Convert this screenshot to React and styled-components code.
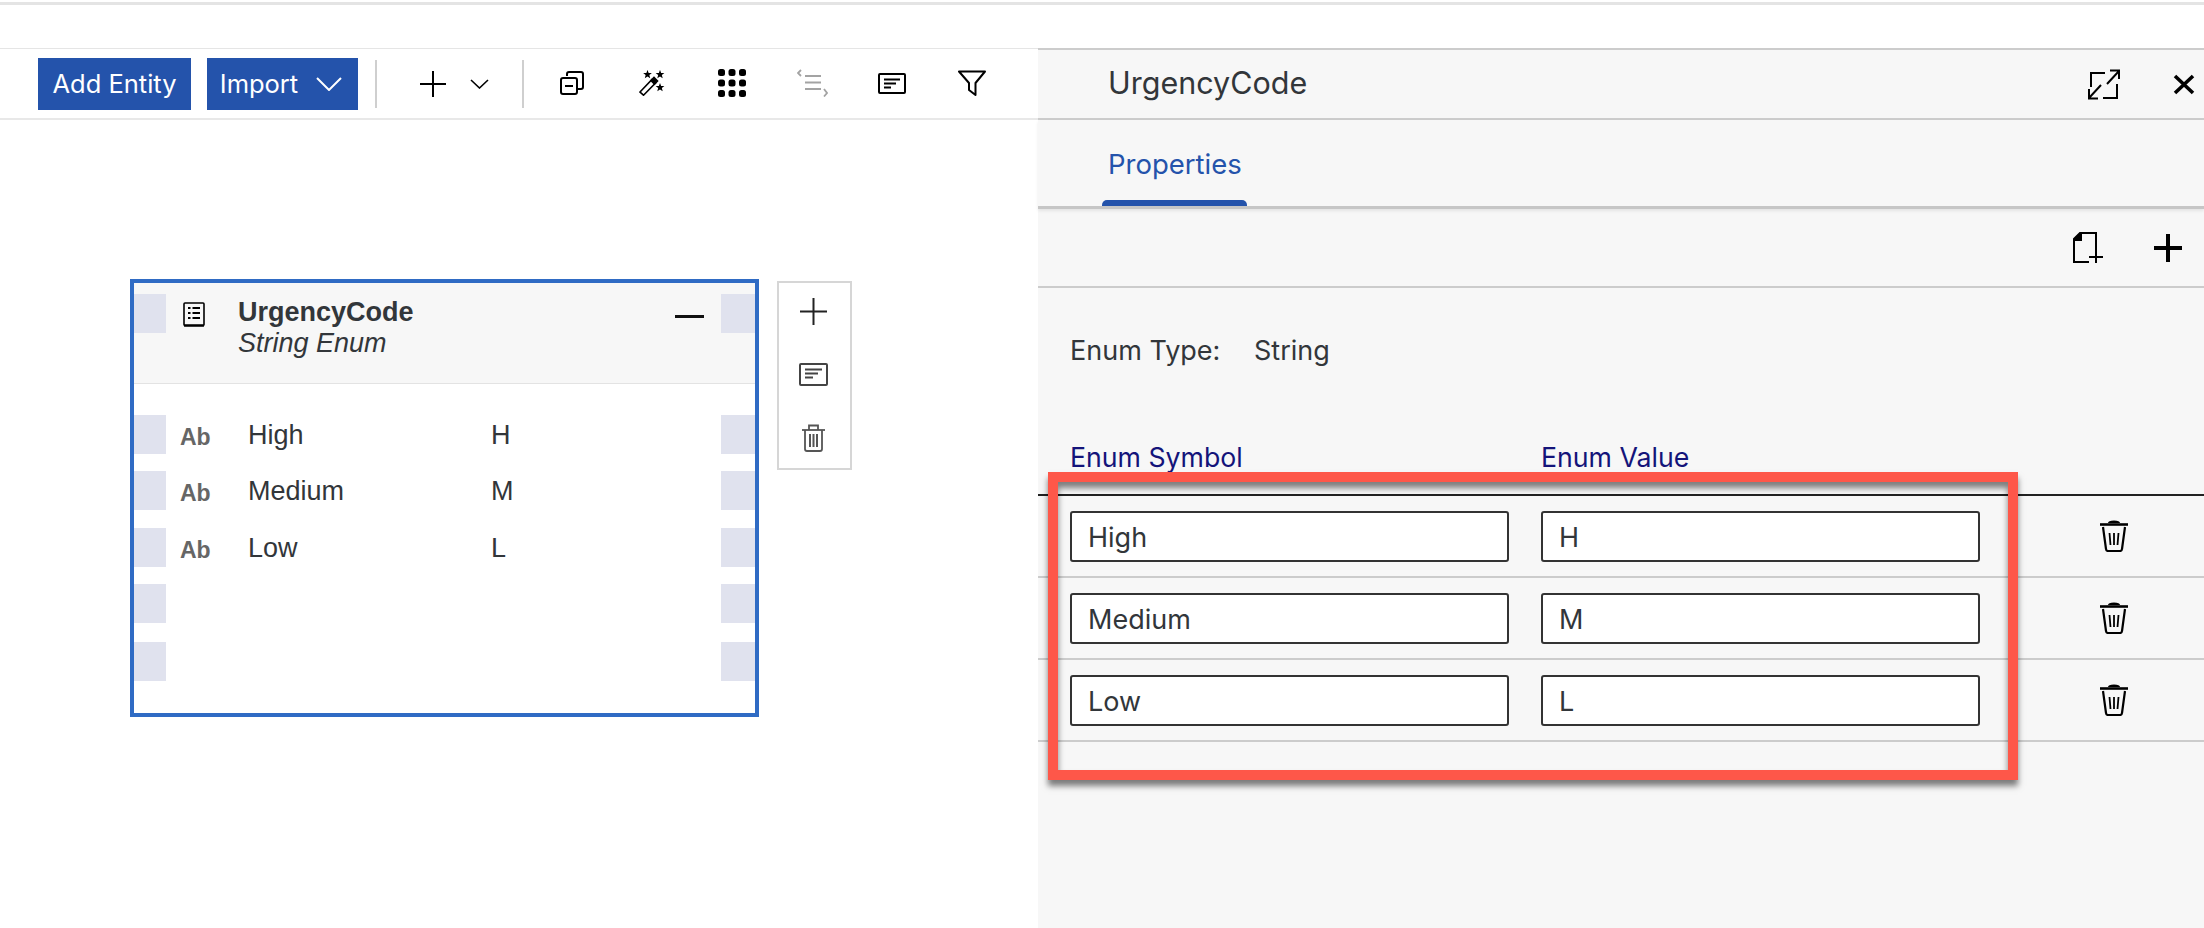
import styled, { createGlobalStyle } from "styled-components";

const GlobalStyle = createGlobalStyle`
  html, body {
    margin: 0;
    padding: 0;
    background: #fff;
    overflow: hidden;
  }
  body {
    font-family: Inter, "Liberation Sans", Arial, sans-serif;
    color: #32363a;
  }
  * {
    box-sizing: border-box;
  }
`;

const Page = styled.div`
  width: 2204px;
  height: 928px;
  position: relative;
  overflow: hidden;
`;

const TopStrip = styled.div`
  height: 48px;
  padding-top: 2px;
  &::before {
    content: "";
    display: block;
    height: 3px;
    background: #e4e4e4;
  }
`;

const Main = styled.div`
  display: flex;
  height: 880px;
`;

const LeftPane = styled.div`
  width: 1038px;
  flex-shrink: 0;
`;

const Toolbar = styled.div`
  height: 72px;
  border-top: 1px solid #e5e5e5;
  border-bottom: 2px solid #e8e8e8;
  padding-left: 38px;
  display: flex;
  align-items: center;
`;

const PrimaryButton = styled.div`
  width: ${(p) => p.$width}px;
  height: 52px;
  margin-right: ${(p) => p.$gap}px;
  padding-right: ${(p) => (p.$menu ? 3 : 0)}px;
  background: #2453ab;
  color: #fff;
  font-size: 25.5px;
  display: flex;
  align-items: center;
  justify-content: center;
  gap: 18px;
`;

const Separator = styled.div`
  width: 2px;
  height: 48px;
  background: #cfcfcf;
`;

const AddGroup = styled.div`
  width: 145px;
  padding-left: 43px;
  display: flex;
  align-items: center;
  gap: 24px;
`;

const IconGrid = styled.div`
  display: grid;
  grid-template-columns: repeat(6, 80px);
  margin-left: 8px;
  margin-top: -1px;
  justify-items: center;
  align-items: center;
`;

const Canvas = styled.div`
  padding: 159px 0 0 130px;
  display: flex;
  align-items: flex-start;
  gap: 18px;
`;

const EntityCard = styled.div`
  width: 629px;
  height: 438px;
  border: 4px solid #2f6bc4;
  background: #fff;
`;

const CardHeader = styled.div`
  height: 101px;
  background: #f7f7f7;
  border-bottom: 1px solid #e3e3e3;
  padding-top: 11px;
  display: flex;
  align-items: flex-start;
  justify-content: space-between;
`;

const Port = styled.div`
  width: ${(p) => (p.$right ? 34 : 32)}px;
  height: 39px;
  flex-shrink: 0;
  background: #e0e2ee;
`;

const HeaderMain = styled.div`
  flex: 1;
  display: flex;
  align-items: flex-start;
  font-family: "Liberation Sans", Arial, sans-serif;
`;

const HeaderIcon = styled.div`
  width: 72px;
  padding: 8px 0 0 17px;
`;

const HeaderText = styled.div`
  flex: 1;
  font-size: 27px;
  line-height: 31px;
  margin-top: 3px;
`;

const EntityName = styled.div`
  font-weight: 700;
  color: #32363a;
`;

const EntityKind = styled.div`
  font-style: italic;
  color: #32363a;
`;

const Collapse = styled.div`
  width: 29px;
  height: 3px;
  background: #111;
  margin: 21px 17px 0 0;
`;

const CardBody = styled.div`
  padding-top: 31px;
  display: flex;
  flex-direction: column;
  gap: 17.3px;
`;

const AttrRow = styled.div`
  display: flex;
  align-items: center;
  font-family: "Liberation Sans", Arial, sans-serif;
  &:last-child {
    margin-top: 2px;
  }
`;

const AttrCells = styled.div`
  flex: 1;
  height: 39px;
  display: grid;
  grid-template-columns: 68px 243px 1fr;
  padding-left: 14px;
  font-size: 27px;
  line-height: 41px;
  color: #32363a;
`;

const AttrType = styled.span`
  font-size: 23px;
  line-height: 44px;
  font-weight: 700;
  color: #666;
`;

const SideActions = styled.div`
  width: 75px;
  height: 189px;
  margin-top: 2px;
  border: 2px solid #d6d6d6;
  display: flex;
  flex-direction: column;
  align-items: center;
  padding: 15px 2px 0 0;
  gap: 38px;
`;

const RightPanel = styled.div`
  flex: 1;
  background: #f7f7f7;
  border-top: 2px solid #cccccc;
`;

const PanelHeader = styled.div`
  height: 70px;
  border-bottom: 2px solid #cccccc;
  padding: 0 9px 0 70px;
  display: flex;
  align-items: center;
  gap: 53px;
`;

const PanelTitle = styled.div`
  flex: 1;
  font-size: 30.5px;
  color: #32363a;
  margin-top: -4px;
`;

const TabBar = styled.div`
  height: 89px;
  padding-left: 64px;
  border-bottom: 3px solid #c6c6c6;
  box-shadow: 0 2px 3px rgba(0, 0, 0, 0.08);
  display: flex;
`;

const Tab = styled.div`
  width: 145px;
  height: 86px;
  padding: 24px 0 0 6px;
  display: flex;
  flex-direction: column;
  justify-content: space-between;
  font-size: 27.5px;
  line-height: 40px;
  color: #2453ab;
`;

const TabIndicator = styled.div`
  height: 6px;
  margin-left: -6px;
  background: #2453ab;
  border-radius: 5px 5px 0 0;
`;

const PanelActions = styled.div`
  height: 79px;
  border-bottom: 2px solid #cccccc;
  padding-right: 22px;
  display: flex;
  align-items: center;
  justify-content: flex-end;
  gap: 51px;
`;

const EnumType = styled.div`
  height: 132px;
  padding: 44px 0 0 32px;
  display: flex;
  font-size: 27px;
  line-height: 38px;
  color: #32363a;
`;

const EnumTypeLabel = styled.span`
  width: 184px;
`;

const TableHead = styled.div`
  height: 76px;
  padding: 19px 0 0 32px;
  border-bottom: 2px solid #222;
  display: grid;
  grid-template-columns: 471px 1fr;
  font-size: 26.7px;
  line-height: 36px;
  color: #14147a;
`;

const TableRow = styled.div`
  height: 82px;
  padding: 0 0 0 32px;
  border-bottom: 2px solid #cccccc;
  display: flex;
  align-items: center;
  gap: 32px;
`;

const FieldBox = styled.div`
  width: 439px;
  height: 51px;
  background: #fff;
  border: 2px solid #333;
  border-radius: 3px;
  padding-left: 16px;
  font-size: 27px;
  line-height: 50px;
  color: #32363a;
`;

const RowDelete = styled.div`
  margin-left: 88px;
  display: flex;
`;

// red marker laid over the table in the screenshot
const Highlight = styled.div`
  position: absolute;
  left: 1048px;
  top: 472px;
  width: 970px;
  height: 308px;
  border: 10px solid #fe5749;
  box-shadow: 0 6px 6px rgba(0, 0, 0, 0.5), inset 0 6px 6px rgba(0, 0, 0, 0.5);
`;

const Svg = ({ w, h, children, color = "#000", sw = 2 }) => (
  <svg width={w} height={h} viewBox={`0 0 ${w} ${h}`} fill="none" stroke={color} strokeWidth={sw}>
    {children}
  </svg>
);

const PlusIcon = ({ size = 26, sw = 2, color }) => (
  <Svg w={size} h={size} sw={sw} color={color}>
    <path d={`M${size / 2} 0V${size}M0 ${size / 2}H${size}`} />
  </Svg>
);

const ChevronIcon = ({ w = 19, h = 10, color = "#000", sw = 1.6 }) => (
  <Svg w={w} h={h} color={color} sw={sw}>
    <path d={`M1 1L${w / 2} ${h - 1}L${w - 1} 1`} />
  </Svg>
);

const CopyIcon = () => (
  <Svg w={24} h={24} sw={2}>
    <path d="M7 5V3a2 2 0 0 1 2-2h12a2 2 0 0 1 2 2v13a2 2 0 0 1-2 2h-3" />
    <rect x="1" y="7" width="16" height="16" rx="2" />
    <path d="M5 15H13" />
  </Svg>
);

const Star = ({ x, y, r = 4.6 }) => {
  const pts = [];
  for (let i = 0; i < 10; i++) {
    const rad = i % 2 === 0 ? r : r * 0.42;
    const a = (Math.PI / 5) * i - Math.PI / 2;
    pts.push(`${(x + rad * Math.cos(a)).toFixed(2)},${(y + rad * Math.sin(a)).toFixed(2)}`);
  }
  return <polygon points={pts.join(" ")} fill="#000" stroke="none" />;
};

const WandIcon = () => (
  <Svg w={26} h={26} sw={1.6}>
    <Star x={8.5} y={4.5} />
    <Star x={21} y={4.5} />
    <Star x={21} y={17.5} />
    <path d="M1 22L13 9.5L16.5 13L4.5 25.2Z" />
    <path d="M12 10.5L15 7.5L18.5 11L15.5 14Z" fill="#000" />
  </Svg>
);

const GridIcon = () => (
  <svg width="28" height="28" viewBox="0 0 28 28" fill="#000">
    {[0, 1, 2].flatMap((r) =>
      [0, 1, 2].map((c) => <rect key={`${r}${c}`} x={c * 10.5} y={r * 10.5} width="7" height="7" rx="2.5" />)
    )}
  </svg>
);

const GroupIcon = () => (
  <Svg w={31} h={28} color="#a3a3a3" sw={1.8}>
    <path d="M4 1L1 4L4 7" />
    <path d="M8 7H24M8 13.5H24M8 20H24" />
    <path d="M27 20L30 24L27 27.5" />
  </Svg>
);

const NoteIcon = ({ w = 28, h = 21, color = "#000", sw = 2 }) => (
  <Svg w={w} h={h} color={color} sw={sw}>
    <rect x="1" y="1" width={w - 2} height={h - 2} rx="1" />
    <path d={`M6 6.5H${w - 6}M6 10.5H${w - 10}M6 14.5H${w - 15}`} />
  </Svg>
);

const FilterIcon = () => (
  <Svg w={28} h={27} sw={2}>
    <path d="M1 1.5H27L17.5 13V25L11 20V13Z" strokeLinejoin="round" />
  </Svg>
);

const EnumIcon = () => (
  <Svg w={22} h={25} sw={1.6}>
    <rect x="1" y="1" width="20" height="22.5" rx="1" />
    <path d="M1 23.5H21" strokeWidth="2.4" />
    <path d="M9.5 6H17M9.5 11H17M9.5 16H17" strokeWidth="1.8" />
    <path d="M5 6H7.5M5 11H7.5M5 16H7.5" strokeWidth="1.8" />
  </Svg>
);

// thin outlined bin used on the entity's side actions
const OutlineTrashIcon = () => (
  <Svg w={23} h={28} color="#555" sw={1.8}>
    <path d="M0 6H23" />
    <path d="M7 6V1.5H16V6" />
    <path d="M3 6V25Q3 27 5 27H18Q20 27 20 25V6" />
    <path d="M8 10V23M11.5 10V23M15 10V23" strokeWidth="2" />
  </Svg>
);

// heavy bin used on the table rows
const SolidTrashIcon = () => (
  <svg width="28" height="32" viewBox="0 0 28 32" fill="none" stroke="#000" strokeWidth="2.2">
    <path d="M8 3Q8 0.5 14 0.5Q20 0.5 20 3Z" fill="#000" stroke="none" />
    <path d="M0 4.5H28" strokeWidth="2.6" />
    <path d="M3 7L6 29Q6.2 31 8 31H20Q21.8 31 22 29L25 7" />
    <path d="M9.5 13L10.5 25M14 13V25M18.5 13L17.5 25" strokeWidth="1.8" />
  </svg>
);

const ExpandIcon = () => (
  <Svg w={32} h={31} sw={2}>
    <path d="M17 4H3V18" />
    <path d="M15 29H29V15" />
    <path d="M19 15L31 2M22 1.5H31V10" />
    <path d="M13 16L1 29M1 20V29.5H10" />
  </Svg>
);

const CloseIcon = () => (
  <Svg w={22} h={21} sw={3.6}>
    <path d="M2 2L20 19M20 2L2 19" />
  </Svg>
);

const DocAddIcon = () => (
  <Svg w={30} h={31} sw={2}>
    <path d="M16 30H1V7L7 1H23V19" />
    <path d="M1 8L8 1V8Z" fill="#000" />
    <path d="M16 25H30M23 18V31" />
  </Svg>
);

const attributes = [
  { symbol: "High", value: "H" },
  { symbol: "Medium", value: "M" },
  { symbol: "Low", value: "L" },
];

const App = () => {
  return (
    <Page>
      <GlobalStyle />
      <TopStrip />
      <Main>
        <LeftPane>
          <Toolbar>
            <PrimaryButton $width={153} $gap={16}>Add Entity</PrimaryButton>
            <PrimaryButton $width={151} $gap={17} $menu>
              Import
              <ChevronIcon w={26} h={14} color="#fff" sw={2} />
            </PrimaryButton>
            <Separator />
            <AddGroup>
              <PlusIcon />
              <ChevronIcon />
            </AddGroup>
            <Separator />
            <IconGrid>
              <CopyIcon />
              <WandIcon />
              <GridIcon />
              <GroupIcon />
              <NoteIcon />
              <FilterIcon />
            </IconGrid>
          </Toolbar>
          <Canvas>
            <EntityCard>
              <CardHeader>
                <Port />
                <HeaderMain>
                  <HeaderIcon>
                    <EnumIcon />
                  </HeaderIcon>
                  <HeaderText>
                    <EntityName>UrgencyCode</EntityName>
                    <EntityKind>String Enum</EntityKind>
                  </HeaderText>
                  <Collapse />
                </HeaderMain>
                <Port $right />
              </CardHeader>
              <CardBody>
                {attributes.map((a) => (
                  <AttrRow key={a.symbol}>
                    <Port />
                    <AttrCells>
                      <AttrType>Ab</AttrType>
                      <span>{a.symbol}</span>
                      <span>{a.value}</span>
                    </AttrCells>
                    <Port $right />
                  </AttrRow>
                ))}
                <AttrRow>
                  <Port />
                  <AttrCells />
                  <Port $right />
                </AttrRow>
                <AttrRow>
                  <Port />
                  <AttrCells />
                  <Port $right />
                </AttrRow>
              </CardBody>
            </EntityCard>
            <SideActions>
              <PlusIcon size={27} color="#222" />
              <NoteIcon w={29} h={23} color="#444" />
              <OutlineTrashIcon />
            </SideActions>
          </Canvas>
        </LeftPane>
        <RightPanel>
          <PanelHeader>
            <PanelTitle>UrgencyCode</PanelTitle>
            <ExpandIcon />
            <CloseIcon />
          </PanelHeader>
          <TabBar>
            <Tab>
              Properties
              <TabIndicator />
            </Tab>
          </TabBar>
          <PanelActions>
            <DocAddIcon />
            <PlusIcon size={28} sw={4} />
          </PanelActions>
          <EnumType>
            <EnumTypeLabel>Enum Type:</EnumTypeLabel>
            <span>String</span>
          </EnumType>
          <TableHead>
            <span>Enum Symbol</span>
            <span>Enum Value</span>
          </TableHead>
          {attributes.map((a) => (
            <TableRow key={a.symbol}>
              <FieldBox>{a.symbol}</FieldBox>
              <FieldBox>{a.value}</FieldBox>
              <RowDelete>
                <SolidTrashIcon />
              </RowDelete>
            </TableRow>
          ))}
        </RightPanel>
      </Main>
      <Highlight />
    </Page>
  );
};

export default App;
